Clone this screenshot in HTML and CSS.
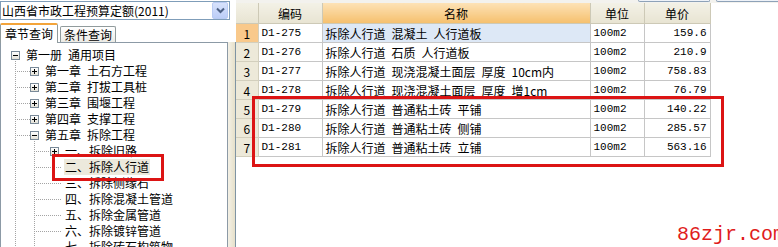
FILE: index.html
```html
<!doctype html>
<html>
<head>
<meta charset="utf-8">
<title>预算定额查询</title>
<link rel="stylesheet" href="styles.css">
</head>
<body>
<div class="app">
  <div class="left">
    <div class="combo">
      <span class="combo-text">山西省市政工程预算定额(2011)</span>
      <span class="combo-btn">
        <svg width="9" height="7" viewBox="0 0 9 7"><path d="M1 1.5 L4.5 5 L8 1.5" fill="none" stroke="#4d6185" stroke-width="2"/></svg>
      </span>
    </div>
    <div class="tabs">
      <span class="tab active">章节查询</span>
      <span class="tab">条件查询</span>
    </div>
    <div class="lower">
      <div class="tree">
        <div class="node l0 open"><span class="tw minus"></span><span class="label">第一册&ensp;通用项目</span></div>
        <div class="node l1"><span class="tw plus"></span><span class="label">第一章&ensp;土石方工程</span></div>
        <div class="node l1"><span class="tw plus"></span><span class="label">第二章&ensp;打拔工具桩</span></div>
        <div class="node l1"><span class="tw plus"></span><span class="label">第三章&ensp;围堰工程</span></div>
        <div class="node l1"><span class="tw plus"></span><span class="label">第四章&ensp;支撑工程</span></div>
        <div class="node l1 open"><span class="tw minus"></span><span class="label">第五章&ensp;拆除工程</span></div>
        <div class="node l2"><span class="tw plus"></span><span class="label">一、拆除旧路</span></div>
        <div class="node l2 leaf"><span class="tw"></span><span class="label current">二、拆除人行道</span></div>
        <div class="node l2 leaf"><span class="tw"></span><span class="label">三、拆除侧缘石</span></div>
        <div class="node l2 leaf"><span class="tw"></span><span class="label">四、拆除混凝土管道</span></div>
        <div class="node l2 leaf"><span class="tw"></span><span class="label">五、拆除金属管道</span></div>
        <div class="node l2 leaf"><span class="tw"></span><span class="label">六、拆除镀锌管道</span></div>
        <div class="node l2 leaf"><span class="tw"></span><span class="label">七、拆除砖石构筑物</span></div>
        <div class="mark mark-tree"></div>
      </div>
      <div class="splitter"></div>
    </div>
  </div>

  <div class="right">
    <div class="top-edge">
      <span class="tb-btn"></span>
      <span class="tb-btn wide"></span>
    </div>
    <table class="grid">
      <colgroup>
        <col class="c-no"><col class="c-code"><col class="c-name"><col class="c-unit"><col class="c-price">
      </colgroup>
      <thead>
        <tr><th class="corner"></th><th>编码</th><th class="sel">名称</th><th>单位</th><th>单价</th></tr>
      </thead>
      <tbody>
        <tr><td class="no sel">1</td><td class="mono">D1-275</td><td class="name sel">拆除人行道&ensp;混凝土&ensp;人行道板</td><td class="mono">100m2</td><td class="mono num">159.6</td></tr>
        <tr><td class="no">2</td><td class="mono">D1-276</td><td class="name">拆除人行道&ensp;石质&ensp;人行道板</td><td class="mono">100m2</td><td class="mono num">210.9</td></tr>
        <tr><td class="no">3</td><td class="mono">D1-277</td><td class="name">拆除人行道&ensp;现浇混凝土面层&ensp;厚度&ensp;10cm内</td><td class="mono">100m2</td><td class="mono num">758.83</td></tr>
        <tr><td class="no">4</td><td class="mono">D1-278</td><td class="name">拆除人行道&ensp;现浇混凝土面层&ensp;厚度&ensp;增1cm</td><td class="mono">100m2</td><td class="mono num">76.79</td></tr>
        <tr><td class="no">5</td><td class="mono">D1-279</td><td class="name">拆除人行道&ensp;普通粘土砖&ensp;平铺</td><td class="mono">100m2</td><td class="mono num">140.22</td></tr>
        <tr><td class="no">6</td><td class="mono">D1-280</td><td class="name">拆除人行道&ensp;普通粘土砖&ensp;侧铺</td><td class="mono">100m2</td><td class="mono num">285.57</td></tr>
        <tr><td class="no">7</td><td class="mono">D1-281</td><td class="name">拆除人行道&ensp;普通粘土砖&ensp;立铺</td><td class="mono">100m2</td><td class="mono num">563.16</td></tr>
      </tbody>
    </table>
    <div class="mark mark-grid"></div>
    <div class="watermark">86zjr.com</div>
  </div>
</div>
</body>
</html>
```

FILE: styles.css
```css
body {
  margin: 0;
  font-family: "Noto Sans CJK SC", sans-serif;
  font-size: 12px;
  color: #000;
  background: #fff;
}
.app {
  display: flex;
  height: 247px;
  overflow: hidden;
}

/* left side */
.left {
  width: 236px;
  display: flex;
  flex-direction: column;
}
.combo {
  box-sizing: border-box;
  width: 230px;
  height: 21px;
  margin-top: 1px;
  border: 1px solid #7f9db9;
  display: flex;
  align-items: center;
  justify-content: space-between;
  padding: 0 1px 0 1px;
}
.combo-text {
  line-height: 17px;
}
.combo-btn {
  box-sizing: border-box;
  width: 16px;
  height: 17px;
  border: 1px solid #b9cbf3;
  border-radius: 2px;
  background: linear-gradient(#d7e2fc, #bccdf7);
  display: flex;
  align-items: center;
  justify-content: center;
}
.tabs {
  display: flex;
  align-items: flex-end;
  height: 19px;
  margin-top: 3px;
}
.tab {
  box-sizing: border-box;
  height: 16px;
  width: 56px;
  margin-left: 2px;
  border: 1px solid #919b9c;
  border-bottom: none;
  border-radius: 2px 2px 0 0;
  background: linear-gradient(#fff, #ecebe5);
  text-align: center;
  line-height: 15px;
}
.tab.active {
  width: 58px;
  height: 20px;
  margin: 0 0 -1px 0;
  border-top: 2px solid #f3a43a;
  background: #fff;
  line-height: 18px;
  position: relative;
  z-index: 1;
}
.lower {
  flex: 1;
  display: flex;
}
.tree {
  box-sizing: border-box;
  width: 228px;
  border: 1px solid #8c9aa6;
  border-bottom: none;
  padding-top: 4px;
  position: relative;
  overflow: hidden;
}
.splitter {
  width: 7px;
  border-right: 1px solid #7f94a3;
  background: linear-gradient(to right, #f4f1e6, #e6e0ca);
}

/* tree nodes */
.node {
  display: flex;
  align-items: center;
  height: 16px;
  white-space: nowrap;
  background-repeat: no-repeat;
}
.tw {
  box-sizing: border-box;
  width: 9px;
  height: 9px;
  flex: none;
}
.minus, .plus {
  border: 1px solid #7a8a99;
  background:
    linear-gradient(#000, #000) center / 5px 1px no-repeat,
    linear-gradient(#fff, #e4e2d8);
}
.plus {
  background:
    linear-gradient(#000, #000) center / 5px 1px no-repeat,
    linear-gradient(#000, #000) center / 1px 5px no-repeat,
    linear-gradient(#fff, #e4e2d8);
}
.label {
  margin-left: 5px;
  padding: 0 1px;
  line-height: 16px;
}
.label.current {
  background: #ece9dc;
}
.l0 {
  padding-left: 10px;
  background-image: repeating-linear-gradient(to bottom, #a4a4a4 0 1px, transparent 1px 2px);
  background-position: 14px 12px;
  background-size: 1px 4px;
}
.l1 {
  padding-left: 29px;
  background-image:
    repeating-linear-gradient(to bottom, #a4a4a4 0 1px, transparent 1px 2px),
    repeating-linear-gradient(to right, #a4a4a4 0 1px, transparent 1px 2px);
  background-position: 14px 0, 14px 8px;
  background-size: 1px 16px, 15px 1px;
}
.l1.open {
  background-image:
    repeating-linear-gradient(to bottom, #a4a4a4 0 1px, transparent 1px 2px),
    repeating-linear-gradient(to right, #a4a4a4 0 1px, transparent 1px 2px),
    repeating-linear-gradient(to bottom, #a4a4a4 0 1px, transparent 1px 2px);
  background-position: 14px 0, 14px 8px, 33px 12px;
  background-size: 1px 16px, 15px 1px, 1px 4px;
}
.l2 {
  padding-left: 49px;
  background-image:
    repeating-linear-gradient(to bottom, #a4a4a4 0 1px, transparent 1px 2px),
    repeating-linear-gradient(to bottom, #a4a4a4 0 1px, transparent 1px 2px),
    repeating-linear-gradient(to right, #a4a4a4 0 1px, transparent 1px 2px);
  background-position: 14px 0, 33px 0, 33px 8px;
  background-size: 1px 16px, 1px 16px, 16px 1px;
}
.l2.leaf {
  background-size: 1px 16px, 1px 16px, 27px 1px;
}

/* right side */
.right {
  flex: 1;
  position: relative;
  background: #fff;
}
.top-edge {
  height: 3px;
  background: #f3f2ee;
  display: flex;
  padding-left: 402px;
  gap: 6px;
}
.tb-btn {
  box-sizing: border-box;
  width: 72px;
  height: 2px;
  border: 1px solid #8ea2b8;
  border-top: none;
  border-radius: 0 0 3px 3px;
  background: #eef2f8;
}
.tb-btn.wide {
  width: 70px;
}
.grid {
  border-collapse: collapse;
  table-layout: fixed;
  width: 474px;
}
.c-no { width: 22px; }
.c-code { width: 64px; }
.c-name { width: 268px; }
.c-unit { width: 54px; }
.c-price { width: 66px; }
.grid th {
  height: 20px;
  padding: 0;
  font-weight: normal;
  text-align: center;
  background: linear-gradient(#f3f1e6, #e8e4d2);
  border: 1px solid #cdc9b6;
  border-top: none;
}
.grid th.corner {
  border-left: none;
}
.grid th.sel {
  background: linear-gradient(#fde2b6, #f5c06e);
}
.grid td {
  height: 18px;
  padding: 0 3px 0 3px;
  border: 1px solid #c6c6c6;
  white-space: nowrap;
  overflow: hidden;
}
.grid td.no {
  padding: 0;
  text-align: center;
  background: #ede9d9;
  border-color: #d3cfbd;
  border-left: none;
}
.grid td.no.sel {
  background: #f9c98b;
}
.grid td.name.sel {
  background: #dde8f6;
}
.mono {
  font-family: "Liberation Mono", monospace;
  font-size: 11px;
}
.num {
  text-align: right;
}

/* red marks drawn over the screenshot */
.mark {
  position: absolute;
  box-sizing: border-box;
  border: 3px solid #dc1414;
}
.mark-tree {
  left: 51px;
  top: 111px;
  width: 112px;
  height: 27px;
}
.mark-grid {
  left: 16px;
  top: 96px;
  width: 472px;
  height: 71px;
}
.watermark {
  position: absolute;
  right: 1px;
  bottom: 1px;
  font-family: "Liberation Mono", monospace;
  font-size: 20px;
  line-height: normal;
  color: #e01c1c;
}
```
